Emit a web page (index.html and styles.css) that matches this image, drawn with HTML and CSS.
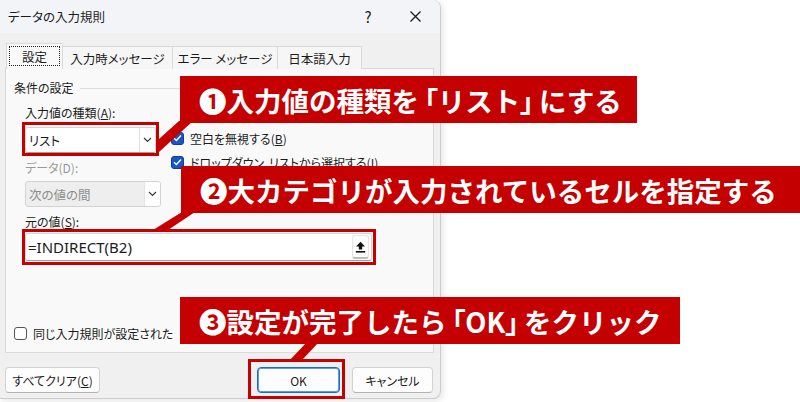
FILE: index.html
```html
<!DOCTYPE html>
<html lang="ja">
<head>
<meta charset="utf-8">
<title>データの入力規則</title>
<link rel="stylesheet" href="styles.css">
</head>
<body>
<div class="dialog">
  <div class="titlebar">
    <span class="title">データの入力規則</span>
    <span class="help">?</span>
    <span class="close"><svg width="13" height="13" viewBox="0 0 13 13"><path d="M1.5 1.5L11.5 11.5M11.5 1.5L1.5 11.5" stroke="#1b1b1b" stroke-width="1.3" fill="none"/></svg></span>
  </div>
  <div class="tabs">
    <div class="tab active t1"><span class="focus">設定</span></div>
    <div class="tab t2">入力時メッセージ</div>
    <div class="tab t3">エラー メッセージ</div>
    <div class="tab t4">日本語入力</div>
  </div>
  <div class="panel">
    <div class="group-head"><span>条件の設定</span><span class="rule"></span></div>
    <div class="group-body">
      <div class="cols">
        <div class="left">
          <div class="lbl">入力値の種類(<u>A</u>):</div>
          <div class="select sel1"><span class="val">リスト</span><span class="chev"><svg width="9" height="6" viewBox="0 0 9 6"><path d="M1 1L4.5 4.5L8 1" stroke="#333" stroke-width="1.1" fill="none"/></svg></span></div>
          <div class="lbl dis">データ(D):</div>
          <div class="select sel2 disabled"><span class="val">次の値の間</span><span class="chev"><svg width="9" height="6" viewBox="0 0 9 6"><path d="M1 1L4.5 4.5L8 1" stroke="#333" stroke-width="1.1" fill="none"/></svg></span></div>
        </div>
        <div class="right">
          <div class="cb"><span class="box on"><svg width="9" height="8" viewBox="0 0 9 8"><path d="M1 4.2L3.4 6.5L8 1.5" stroke="#fff" stroke-width="1.4" fill="none"/></svg></span>空白を無視する(<u>B</u>)</div>
          <div class="cb"><span class="box on"><svg width="9" height="8" viewBox="0 0 9 8"><path d="M1 4.2L3.4 6.5L8 1.5" stroke="#fff" stroke-width="1.4" fill="none"/></svg></span>ドロップダウン<span class="sp"> </span>リストから選択する(<u>I</u>)</div>
        </div>
      </div>
      <div class="lbl src">元の値(<u>S</u>):</div>
      <div class="input"><span class="val">=INDIRECT(B2)</span><span class="upbtn"><svg width="11" height="12" viewBox="0 0 11 12"><path d="M5.5 0.8L10 5.6H7.2V8.6H3.8V5.6H1Z" fill="#111"/><rect x="0.8" y="10" width="9.4" height="1.6" fill="#111"/></svg></span></div>
    </div>
    <div class="cb apply"><span class="box off"></span><span class="apply-text">同じ入力規則が設定された</span></div>
  </div>
  <div class="footer">
    <button class="btn clear">すべてクリア(<u>C</u>)</button>
    <button class="btn ok">OK</button>
    <button class="btn cancel">キャンセル</button>
  </div>
</div>

<svg class="tails" width="800" height="402" viewBox="0 0 800 402">
  <polygon points="179,121 193,121 159,152 159,139" fill="#c40000"/>
  <polygon points="182,212 195,212 168,230 153,230" fill="#c40000"/>
  <polygon points="306,343 318,343 302,360 290,360" fill="#c40000"/>
</svg>
<div class="hl hl1"></div>
<div class="hl hl2"></div>
<div class="hl hl3"></div>
<div class="callout c1">❶入力値の種類を<span class="bo">「</span>リスト<span class="bc">」</span>にする</div>
<div class="callout c2">❷大カテゴリが入力されているセルを指定する</div>
<div class="callout c3">❸設定が完了したら<span class="bo">「</span>OK<span class="bc">」</span>をクリック</div>
</body>
</html>
```

FILE: styles.css
```css
html, body {
  margin: 0;
  padding: 0;
}
body {
  width: 800px;
  height: 402px;
  background: #ffffff;
  position: relative;
  overflow: hidden;
  font-family: "Noto Sans CJK JP", "Noto Sans", sans-serif;
}

.dialog {
  width: 441px;
  height: 399px;
  box-sizing: border-box;
  background: #f0f0f0;
  border-right: 1px solid #cdcdcd;
  border-bottom: 1px solid #cdcdcd;
  border-radius: 0 8px 8px 0;
  box-shadow: 2px 2px 6px rgba(0, 0, 0, 0.10);
  display: flex;
  flex-direction: column;
  font-size: 12px;
  color: #1b1b1b;
  font-feature-settings: "palt";
}

.titlebar {
  height: 33px;
  display: flex;
  align-items: center;
  background: #f3f4f7;
  border-top-right-radius: 8px;
}
.title {
  flex: 1;
  padding-left: 8px;
  font-size: 12.5px;
}
.help {
  width: 48px;
  text-align: center;
  font-size: 15px;
}
.close {
  width: 46px;
  margin-right: 2px;
  display: flex;
  justify-content: center;
}

.tabs {
  display: flex;
  align-items: flex-end;
  height: 26px;
  margin-top: 10px;
  margin-bottom: -1px;
  padding-left: 7px;
  position: relative;
  z-index: 1;
}
.tab {
  height: 23px;
  box-sizing: border-box;
  border: 1px solid #d9d9d9;
  border-bottom: none;
  background: #f6f6f6;
  display: flex;
  align-items: center;
  justify-content: center;
  margin-left: -1px;
  font-size: 12.5px;
}
.t1 { width: 57px; }
.t2 { width: 111px; }
.t3 { width: 106px; }
.t4 { width: 85px; }
.tab.active {
  height: 26px;
  background: #f9f9f9;
  padding: 2px 2px 3px 2px;
  align-items: stretch;
}
.focus {
  flex: 1;
  border: 1px dotted #222;
  display: flex;
  align-items: center;
  justify-content: center;
}

.panel {
  margin-left: 5px;
  width: 429px;
  height: 285px;
  box-sizing: border-box;
  border: 1px solid #d9d9d9;
  background: #f9f9f9;
  display: flex;
  flex-direction: column;
  padding: 11px 0 10px 8px;
}
.group-head {
  display: flex;
  align-items: center;
  height: 16px;
  line-height: 16px;
  margin-right: 8px;
}
.rule {
  flex: 1;
  height: 1px;
  background: #dcdcdc;
  margin-left: 6px;
}
.group-body {
  padding-left: 11px;
}
.cols {
  display: flex;
  margin-top: 8px;
}
.left {
  width: 136px;
  display: flex;
  flex-direction: column;
}
.lbl {
  height: 18px;
  line-height: 18px;
  white-space: nowrap;
}
.lbl.dis {
  margin-top: 6px;
  color: #9a9a9a;
}
.lbl.src {
  margin-top: 6px;
}
.select {
  height: 26px;
  box-sizing: border-box;
  border: 1px solid #d3d3d3;
  border-bottom-color: #9e9e9e;
  border-radius: 3px;
  background: #ffffff;
  display: flex;
  align-items: stretch;
}
.select .val {
  flex: 1;
  display: flex;
  align-items: center;
  padding-left: 3px;
  font-size: 12.5px;
}
.sel1 {
  width: 131px;
  margin-top: 5px;
}
.sel2 {
  width: 136px;
  margin-top: 4px;
}
.select.disabled {
  background: #eeeeee;
  color: #8c8c8c;
  border-color: #d3d3d3;
}
.chev {
  width: 15px;
  border-left: 1px solid #e2e2e2;
  background: #ffffff;
  display: flex;
  align-items: center;
  justify-content: center;
  border-radius: 0 2px 2px 0;
}

.right {
  margin-left: 10px;
  padding-top: 25px;
  display: flex;
  flex-direction: column;
  gap: 6px;
}
.cb {
  display: flex;
  align-items: center;
  height: 18px;
  white-space: nowrap;
}
.cb .sp {
  width: 5px;
}
.box {
  width: 13px;
  height: 13px;
  box-sizing: border-box;
  border-radius: 3px;
  margin-right: 6px;
  display: flex;
  align-items: center;
  justify-content: center;
  flex: none;
}
.box.on {
  background: #1756c4;
  border: 1px solid #0d3f9c;
}
.box.off {
  background: #ffffff;
  border: 1px solid #555555;
}

.input {
  width: 347px;
  height: 28px;
  margin-top: 2px;
  box-sizing: border-box;
  background: #ffffff;
  border: 1px solid #d3d3d3;
  border-bottom-color: #9e9e9e;
  border-radius: 3px;
  display: flex;
  align-items: center;
}
.input .val {
  flex: 1;
  padding-left: 2px;
  font-size: 15px;
  font-family: "Noto Sans", "Noto Sans CJK JP", sans-serif;
}
.upbtn {
  width: 17px;
  height: 24px;
  margin-right: 2px;
  box-sizing: border-box;
  background: #fdfdfd;
  border: 1px solid #e4e4e4;
  border-bottom: 2px solid #bdbdbd;
  border-radius: 3px;
  display: flex;
  align-items: center;
  justify-content: center;
}

.apply {
  margin-top: auto;
}

.footer {
  display: flex;
  margin-top: 14px;
  padding: 0 7px 0 5px;
}
.btn {
  height: 26px;
  box-sizing: border-box;
  border: 1px solid #d3d3d3;
  border-bottom-color: #b3b3b3;
  border-radius: 4px;
  background: #fdfdfd;
  font-family: inherit;
  font-feature-settings: "palt";
  font-size: 12px;
  color: #1b1b1b;
  padding: 0;
}
.clear { width: 95px; }
.ok {
  width: 83px;
  margin-left: auto;
  border-color: #1a6cc8;
  box-shadow: inset 0 0 0 1px #5b9be0;
}
.cancel {
  width: 81px;
  margin-left: 12px;
}

.tails {
  position: absolute;
  left: 0;
  top: 0;
  pointer-events: none;
}
.hl {
  position: absolute;
  box-sizing: border-box;
  border: 3px solid #c40000;
}
.hl1 { left: 22px; top: 122px; width: 137px; height: 34px; }
.hl2 { left: 22px; top: 229px; width: 354px; height: 36px; }
.hl3 { left: 248px; top: 359px; width: 97px; height: 40px; }

.callout {
  position: absolute;
  height: 47px;
  box-sizing: border-box;
  background: #c40000;
  color: #ffffff;
  font-family: "Noto Sans CJK JP", sans-serif;
  font-weight: 700;
  font-size: 27.5px;
  display: flex;
  align-items: center;
  padding-left: 19px;
  white-space: nowrap;
  overflow: hidden;
}
.callout .bo,
.callout .bc {
  font-feature-settings: "palt";
}
.callout .bo {
  margin-left: 5px;
}
.callout .bc {
  margin-right: 5px;
}
.c1 { left: 180px; top: 76px; width: 457px; }
.c2 { left: 181px; top: 166px; width: 619px; }
.c3 { left: 180px; top: 297px; width: 500px; }
```
